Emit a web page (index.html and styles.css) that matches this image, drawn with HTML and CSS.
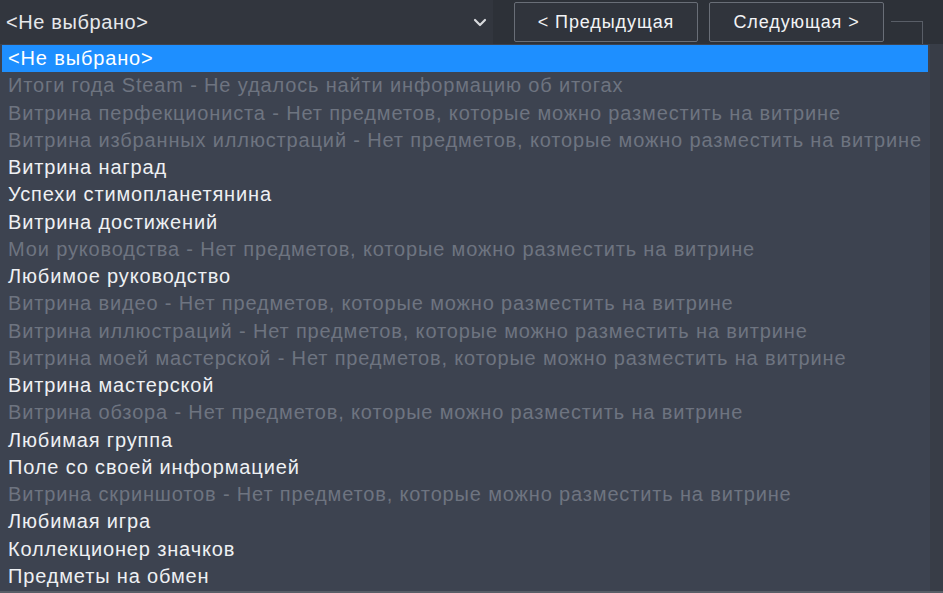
FILE: index.html
```html
<!DOCTYPE html>
<html lang="ru">
<head>
<meta charset="utf-8">
<title>Витрина</title>
<link rel="stylesheet" href="styles.css">
</head>
<body>
<div class="page">
  <div class="topbar">
    <div class="select">
      <span class="select-value">&lt;Не выбрано&gt;</span>
      <svg class="chevron" width="14" height="9" viewBox="0 0 14 9"><path d="M2 2 L7 7 L12 2" fill="none" stroke="#d8dadd" stroke-width="2.2" stroke-linecap="round" stroke-linejoin="round"/></svg>
    </div>
    <div class="nav">
      <button class="btn btn-prev">&lt; Предыдущая</button>
      <button class="btn btn-next">Следующая &gt;</button>
      <div class="corner"></div>
    </div>
  </div>
  <div class="listwrap">
    <ul class="list">
      <li class="item selected">&lt;Не выбрано&gt;</li>
      <li class="item disabled">Итоги года Steam - Не удалось найти информацию об итогах</li>
      <li class="item disabled">Витрина перфекциониста - Нет предметов, которые можно разместить на витрине</li>
      <li class="item disabled">Витрина избранных иллюстраций - Нет предметов, которые можно разместить на витрине</li>
      <li class="item">Витрина наград</li>
      <li class="item">Успехи стимопланетянина</li>
      <li class="item">Витрина достижений</li>
      <li class="item disabled">Мои руководства - Нет предметов, которые можно разместить на витрине</li>
      <li class="item">Любимое руководство</li>
      <li class="item disabled">Витрина видео - Нет предметов, которые можно разместить на витрине</li>
      <li class="item disabled">Витрина иллюстраций - Нет предметов, которые можно разместить на витрине</li>
      <li class="item disabled">Витрина моей мастерской - Нет предметов, которые можно разместить на витрине</li>
      <li class="item">Витрина мастерской</li>
      <li class="item disabled">Витрина обзора - Нет предметов, которые можно разместить на витрине</li>
      <li class="item">Любимая группа</li>
      <li class="item">Поле со своей информацией</li>
      <li class="item disabled">Витрина скриншотов - Нет предметов, которые можно разместить на витрине</li>
      <li class="item">Любимая игра</li>
      <li class="item">Коллекционер значков</li>
      <li class="item">Предметы на обмен</li>
    </ul>
    <div class="side"></div>
  </div>
</div>
</body>
</html>
```
FILE: styles.css
```css
html, body {
  margin: 0;
  padding: 0;
  background: #2d3138;
}
body {
  font-family: "Liberation Sans", Arial, sans-serif;
  color: #eceef1;
}
.page {
  width: 943px;
  height: 593px;
  overflow: hidden;
  display: flex;
  flex-direction: column;
}
.topbar {
  height: 44px;
  display: flex;
  align-items: stretch;
  flex: none;
}
.select {
  width: 493px;
  background: #32363e;
  display: flex;
  align-items: center;
  justify-content: space-between;
  padding: 0 6px 0 6px;
  box-sizing: border-box;
}
.select-value {
  font-size: 20px;
  letter-spacing: 0.6px;
  color: #e6e8eb;
}
.chevron {
  margin-top: 1px;
}
.nav {
  display: flex;
  align-items: flex-start;
  padding-left: 21px;
  gap: 11px;
}
.btn {
  margin-top: 2px;
  height: 40px;
  box-sizing: border-box;
  background: #30343c;
  border: 1px solid #696e77;
  border-radius: 2px;
  color: #f2f3f5;
  font-family: "Liberation Sans", Arial, sans-serif;
  font-size: 18px;
  letter-spacing: 0.9px;
  padding: 0;
}
.btn-prev { width: 184px; }
.btn-next { width: 175px; }
.corner {
  margin-top: 21px;
  margin-left: -4px;
  width: 32px;
  height: 23px;
  box-sizing: border-box;
  border-top: 1px solid #595e67;
  border-right: 1px solid #595e67;
}
.listwrap {
  flex: none;
  display: flex;
  height: 549px;
}
.list {
  list-style: none;
  margin: 0;
  width: 930px;
  box-sizing: border-box;
  padding: 1px 2px 0 2px;
  background: #3d4350;
  border-bottom: 2px solid #585d66;
}
.item {
  height: 27.25px;
  line-height: 27.25px;
  padding-left: 6px;
  font-size: 20px;
  letter-spacing: 0.85px;
  white-space: nowrap;
  color: #eef0f3;
}
.item.disabled {
  color: #6e7480;
}
.item.selected {
  background: #1e8fff;
  color: #ffffff;
}
.side {
  flex: 1;
  background: #383d47;
  border-bottom: 2px solid #585d66;
}
```
